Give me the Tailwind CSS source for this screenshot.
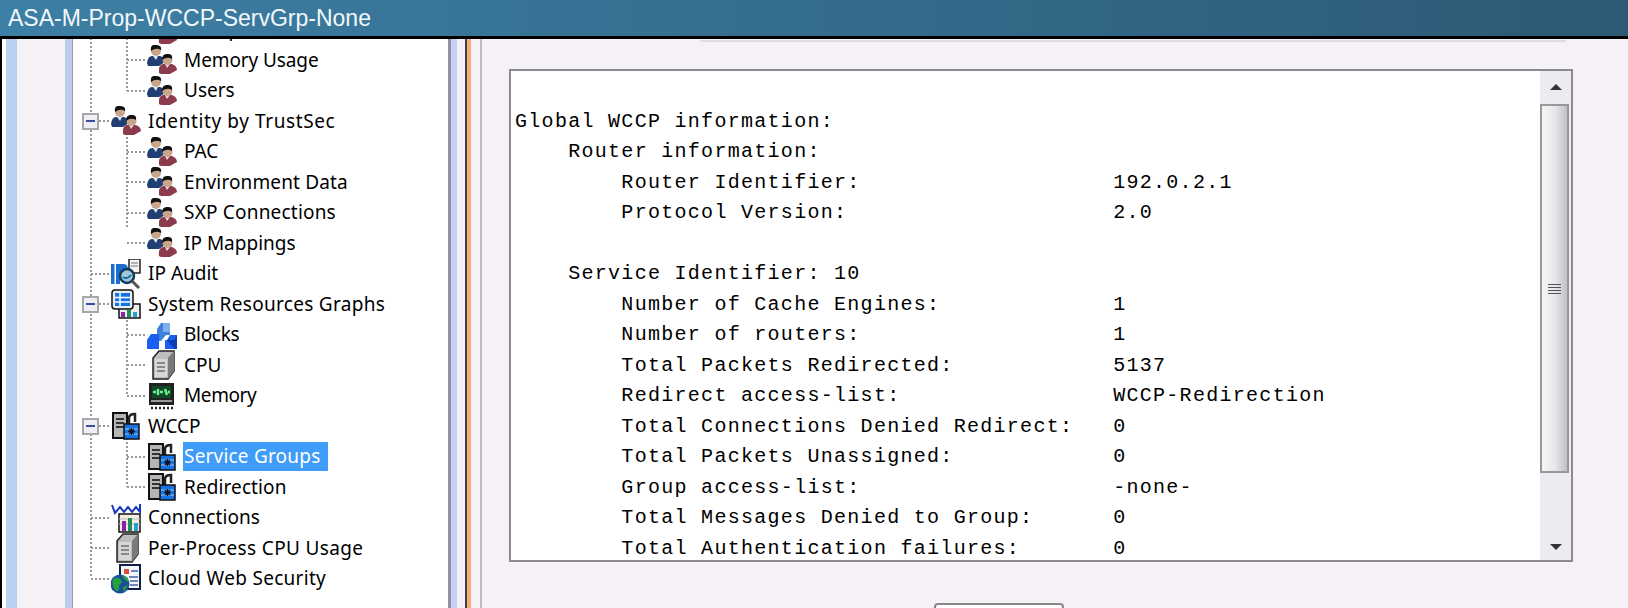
<!DOCTYPE html>
<html lang="en">
<head>
    <meta charset="UTF-8">
    <meta name="viewport" content="width=device-width, initial-scale=1.0">
    <title>ASA-M-Prop-WCCP-ServGrp-None</title>
    <script src="https://cdn.jsdelivr.net/npm/@tailwindcss/browser@4"></script>
</head>
<body class="h-[608px] overflow-hidden bg-[#f5f1f6]">

    <!-- Icons -->
    <svg class="hidden">
        <symbol id="i-people" viewBox="0 0 30 30">
            <path d="M0 18 Q1 11 5 11 L13 11 Q17 12 18 17 L12 21 L1 21Z" fill="#1f3f72"/>
            <path d="M6 11 L9 15 L11 11Z" fill="#dfe6ee"/>
            <circle cx="9" cy="6" r="5" fill="#c9a58c"/>
            <path d="M4 6 Q3 -1 9 0 Q15 0 14 5 Q9 2 4 6Z" fill="#111"/>
            <path d="M12 28 Q11 20 16 19 L25 19 Q30 21 30 25 L23 29 L14 29Z" fill="#8c3b4c"/>
            <path d="M18 19 L20 23 L23 19Z" fill="#e8dadc"/>
            <circle cx="20.500" cy="15" r="5" fill="#c9a58c"/>
            <path d="M15 15 Q15 8 21 9 Q26 9 25 14 Q20 11 15 15Z" fill="#111"/>
        </symbol>
        <symbol id="i-audit" viewBox="0 0 30 30">
            <rect x="0" y="5" width="3.500" height="20" fill="#1c6fd0"/>
            <path d="M5 5 H13 Q17 5 17 11 Q17 16 12 16 H9 V25 H5Z" fill="#1c6fd0"/>
            <rect x="18" y="0" width="11" height="14" fill="#f3f3f3" stroke="#222" stroke-width="1.500"/>
            <path d="M20 4 H27 M20 7 H27" stroke="#777"/>
            <circle cx="16" cy="17" r="7" fill="#9fc6da" stroke="#123a5c" stroke-width="2.500"/>
            <path d="M12 18 Q16 21 20 16" stroke="#1c6fa0" stroke-width="2" fill="none"/>
            <path d="M21 22 L28 29" stroke="#555" stroke-width="3"/>
        </symbol>
        <symbol id="i-graphs" viewBox="0 0 30 30">
            <rect x="8" y="15" width="21" height="14" fill="#eee" stroke="#111" stroke-width="1.500"/>
            <rect x="10" y="23" width="4" height="5" fill="#8e1fa8"/>
            <rect x="16" y="21" width="4" height="7" fill="#1f8e5a"/>
            <rect x="22" y="23" width="4" height="5" fill="#2a9fd8"/>
            <rect x="1" y="1" width="21" height="19" rx="3" fill="#e9eef5" stroke="#111" stroke-width="1.500"/>
            <rect x="4" y="4" width="15" height="13" fill="#1573e8"/>
            <path d="M4 8.500 H19 M4 13 H19 M9 4 V17" stroke="#fff" stroke-width="1.500"/>
        </symbol>
        <symbol id="i-blocks" viewBox="0 0 30 30">
            <path d="M10 9 L14 3 H23 V15 L19 15 L14 21 H10Z" fill="#3f80dd"/>
            <path d="M16 3 H23 V12 H16Z" fill="#7fb0ec"/>
            <path d="M4 14 H12 L12 29 H0 V20Z" fill="#1a5ff0"/>
            <path d="M20 20 L23 15 H30 V29 H18 V20Z" fill="#1a5ff0"/>
            <path d="M20 20 H27 L30 15 V29 H27Z" fill="#0e3fb5"/>
        </symbol>
        <symbol id="i-cpu" viewBox="0 0 30 30">
            <path d="M6 8 L12 1 H27 V21 L21 29 H6Z" fill="#bdbdbd" stroke="#222" stroke-width="1.500"/>
            <path d="M21 8 L27 1 V21 L21 29Z" fill="#7a7a7a"/>
            <rect x="8" y="9" width="12" height="18" fill="#d7d7d7"/>
            <path d="M10 13 H18 M10 17 H18 M10 21 H18" stroke="#888" stroke-width="2"/>
        </symbol>
        <symbol id="i-memory" viewBox="0 0 30 30">
            <rect x="2" y="2" width="25" height="22" fill="#222"/>
            <rect x="5" y="5" width="19" height="12" fill="#0d4a28"/>
            <path d="M6 11 H9 M11 8 V14 M13 11 H16 M18 8 L20 14 M21 11 H23" stroke="#6cf08f" stroke-width="2.500"/>
            <rect x="4" y="19" width="21" height="2" fill="#999"/>
            <path d="M4 27 H26" stroke="#222" stroke-width="2.500" stroke-dasharray="2 2"/>
        </symbol>
        <symbol id="i-wccp" viewBox="0 0 30 30">
            <rect x="2" y="2" width="14" height="25" fill="#b5b5b5" stroke="#111" stroke-width="2"/>
            <path d="M5 8 H13 M5 12 H13 M5 16 H13" stroke="#333" stroke-width="2"/>
            <path d="M18 13 V7 Q18 3 24 3 V11" stroke="#222" stroke-width="2.500" fill="none"/>
            <rect x="13" y="13" width="15" height="15" fill="#1573e8" stroke="#111" stroke-width="1.500"/>
            <path d="M14 18 H27 M14 23 H27" stroke="#9ec9f5" stroke-width="1"/>
            <path d="M20.500 17 V24 M17 20.500 H24 M18 18 L23 23 M23 18 L18 23" stroke="#111" stroke-width="1.200"/>
        </symbol>
        <symbol id="i-conn" viewBox="0 0 30 30">
            <rect x="8" y="11" width="21" height="18" fill="#f2efe2" stroke="#111" stroke-width="1.500"/>
            <path d="M8 16 H29 M8 21 H29" stroke="#bbb"/>
            <rect x="11" y="18" width="4" height="10" fill="#8e1fa8"/>
            <rect x="17" y="15" width="4" height="13" fill="#1f8e5a"/>
            <rect x="23" y="20" width="4" height="8" fill="#2a9fd8"/>
            <path d="M1 2 L4 10 L9 4 L13 9 L17 4 L21 9 L25 4 L29 9 V1" stroke="#1a35c0" stroke-width="2" fill="none"/>
        </symbol>
        <symbol id="i-cloud" viewBox="0 0 30 30">
            <rect x="9" y="1" width="20" height="24" fill="#f2f5fa" stroke="#10204a" stroke-width="2"/>
            <rect x="13" y="5" width="5" height="5" fill="#d9503f"/>
            <path d="M20 7 H27 M18 13 H27 M19 17 H27 M19 21 H27" stroke="#6d86b5" stroke-width="2"/>
            <circle cx="9" cy="20" r="9.500" fill="#1b4f9c"/>
            <path d="M2 15 Q7 12 9 15 Q13 18 8 21 Q9 28 5 27 Q0 21 2 15Z M11 11 Q17 13 18 18 Q13 17 11 11Z M12 23 L17 21 L13 28Z" fill="#24a33c"/>
        </symbol>
    </svg>

    <!-- Title bar -->
    <header class="h-[39px] bg-gradient-to-r from-[#3d80a5] to-[#2c5975] border-b-[3px] border-black pl-2 flex items-center">
        <h1 class="text-[23px] text-[#f2f7fa] font-['Liberation_Sans',sans-serif]">ASA-M-Prop-WCCP-ServGrp-None</h1>
    </header>

    <div class="flex h-[569px]">
        <!-- Left rails -->
        <div class="w-[2px] bg-black"></div>
        <div class="w-[4px] bg-white"></div>
        <div class="w-[11px] bg-[#b9d0ef]"></div>
        <div class="w-[48px]"></div>
        <div class="w-[7px] bg-[#bccdf0]"></div>
        <div class="w-[1px] bg-[#9a9aa8]"></div>

        <!-- Tree -->
        <nav class="relative w-[375px] bg-white overflow-hidden font-['Noto_Sans',sans-serif] text-[19px] text-black">
            <div class="-mt-[24.6px] relative">
                <!-- trunk -->
                <span class="absolute left-[17px] top-0 h-[564px] w-[2px] bg-[repeating-linear-gradient(to_bottom,#999_0_2px,transparent_2px_4px)]"></span>

                <!-- Identity children (end of list) -->
                <div class="relative">
                    <span class="absolute left-[53px] top-0 h-[77px] w-[2px] bg-[repeating-linear-gradient(to_bottom,#999_0_2px,transparent_2px_4px)]"></span>
                    <div class="relative h-[30.5px] flex items-center pl-[74px]"><span class="w-[20px] h-[2px] -ml-[20px] bg-[repeating-linear-gradient(to_right,#999_0_2px,transparent_2px_4px)]"></span><svg class="w-[30px] h-[30px] shrink-0"><use href="#i-people"/></svg><span class="ml-[7px]">Groups</span></div>
                    <div class="relative h-[30.5px] flex items-center pl-[74px]"><span class="w-[20px] h-[2px] -ml-[20px] bg-[repeating-linear-gradient(to_right,#999_0_2px,transparent_2px_4px)]"></span><svg class="w-[30px] h-[30px] shrink-0"><use href="#i-people"/></svg><span class="ml-[7px] tracking-[-0.1px]">Memory Usage</span></div>
                    <div class="relative h-[30.5px] flex items-center pl-[74px]"><span class="w-[20px] h-[2px] -ml-[20px] bg-[repeating-linear-gradient(to_right,#999_0_2px,transparent_2px_4px)]"></span><svg class="w-[30px] h-[30px] shrink-0"><use href="#i-people"/></svg><span class="ml-[7px]">Users</span></div>
                </div>

                <!-- Identity by TrustSec -->
                <div class="relative">
                    <span class="absolute left-[53px] top-[15px] h-[107px] w-[2px] bg-[repeating-linear-gradient(to_bottom,#999_0_2px,transparent_2px_4px)]"></span>
                    <div class="relative h-[30.5px] flex items-center pl-[38px]">
                        <span class="absolute left-[9px] w-[17px] h-[17px] border-2 border-[#a8a8a8] bg-[#eeeef4] flex items-center justify-center"><span class="w-[9px] h-[2px] bg-[#3a4f9a]"></span></span>
                        <span class="w-[12px] h-[2px] -ml-[12px] bg-[repeating-linear-gradient(to_right,#999_0_2px,transparent_2px_4px)]"></span><svg class="w-[30px] h-[30px] shrink-0"><use href="#i-people"/></svg><span class="ml-[7px] tracking-[0.6px]">Identity by TrustSec</span>
                    </div>
                    <div class="relative h-[30.5px] flex items-center pl-[74px]"><span class="w-[20px] h-[2px] -ml-[20px] bg-[repeating-linear-gradient(to_right,#999_0_2px,transparent_2px_4px)]"></span><svg class="w-[30px] h-[30px] shrink-0"><use href="#i-people"/></svg><span class="ml-[7px]">PAC</span></div>
                    <div class="relative h-[30.5px] flex items-center pl-[74px]"><span class="w-[20px] h-[2px] -ml-[20px] bg-[repeating-linear-gradient(to_right,#999_0_2px,transparent_2px_4px)]"></span><svg class="w-[30px] h-[30px] shrink-0"><use href="#i-people"/></svg><span class="ml-[7px] tracking-[0.13px]">Environment Data</span></div>
                    <div class="relative h-[30.5px] flex items-center pl-[74px]"><span class="w-[20px] h-[2px] -ml-[20px] bg-[repeating-linear-gradient(to_right,#999_0_2px,transparent_2px_4px)]"></span><svg class="w-[30px] h-[30px] shrink-0"><use href="#i-people"/></svg><span class="ml-[7px] tracking-[0.2px]">SXP Connections</span></div>
                    <div class="relative h-[30.5px] flex items-center pl-[74px]"><span class="w-[20px] h-[2px] -ml-[20px] bg-[repeating-linear-gradient(to_right,#999_0_2px,transparent_2px_4px)]"></span><svg class="w-[30px] h-[30px] shrink-0"><use href="#i-people"/></svg><span class="ml-[7px]">IP Mappings</span></div>
                </div>

                <!-- IP Audit -->
                <div class="relative h-[30.5px] flex items-center pl-[38px]"><span class="w-[20px] h-[2px] -ml-[20px] bg-[repeating-linear-gradient(to_right,#999_0_2px,transparent_2px_4px)]"></span><svg class="w-[30px] h-[30px] shrink-0"><use href="#i-audit"/></svg><span class="ml-[7px]">IP Audit</span></div>

                <!-- System Resources Graphs -->
                <div class="relative">
                    <span class="absolute left-[53px] top-[15px] h-[92px] w-[2px] bg-[repeating-linear-gradient(to_bottom,#999_0_2px,transparent_2px_4px)]"></span>
                    <div class="relative h-[30.5px] flex items-center pl-[38px]">
                        <span class="absolute left-[9px] w-[17px] h-[17px] border-2 border-[#a8a8a8] bg-[#eeeef4] flex items-center justify-center"><span class="w-[9px] h-[2px] bg-[#3a4f9a]"></span></span>
                        <span class="w-[12px] h-[2px] -ml-[12px] bg-[repeating-linear-gradient(to_right,#999_0_2px,transparent_2px_4px)]"></span><svg class="w-[30px] h-[30px] shrink-0"><use href="#i-graphs"/></svg><span class="ml-[7px] tracking-[0.3px]">System Resources Graphs</span>
                    </div>
                    <div class="relative h-[30.5px] flex items-center pl-[74px]"><span class="w-[20px] h-[2px] -ml-[20px] bg-[repeating-linear-gradient(to_right,#999_0_2px,transparent_2px_4px)]"></span><svg class="w-[30px] h-[30px] shrink-0"><use href="#i-blocks"/></svg><span class="ml-[7px] tracking-[-0.3px]">Blocks</span></div>
                    <div class="relative h-[30.5px] flex items-center pl-[74px]"><span class="w-[20px] h-[2px] -ml-[20px] bg-[repeating-linear-gradient(to_right,#999_0_2px,transparent_2px_4px)]"></span><svg class="w-[30px] h-[30px] shrink-0"><use href="#i-cpu"/></svg><span class="ml-[7px]">CPU</span></div>
                    <div class="relative h-[30.5px] flex items-center pl-[74px]"><span class="w-[20px] h-[2px] -ml-[20px] bg-[repeating-linear-gradient(to_right,#999_0_2px,transparent_2px_4px)]"></span><svg class="w-[30px] h-[30px] shrink-0"><use href="#i-memory"/></svg><span class="ml-[7px] tracking-[-0.4px]">Memory</span></div>
                </div>

                <!-- WCCP -->
                <div class="relative">
                    <span class="absolute left-[53px] top-[15px] h-[61px] w-[2px] bg-[repeating-linear-gradient(to_bottom,#999_0_2px,transparent_2px_4px)]"></span>
                    <div class="relative h-[30.5px] flex items-center pl-[38px]">
                        <span class="absolute left-[9px] w-[17px] h-[17px] border-2 border-[#a8a8a8] bg-[#eeeef4] flex items-center justify-center"><span class="w-[9px] h-[2px] bg-[#3a4f9a]"></span></span>
                        <span class="w-[12px] h-[2px] -ml-[12px] bg-[repeating-linear-gradient(to_right,#999_0_2px,transparent_2px_4px)]"></span><svg class="w-[30px] h-[30px] shrink-0"><use href="#i-wccp"/></svg><span class="ml-[7px]">WCCP</span>
                    </div>
                    <div class="relative h-[30.5px] flex items-center pl-[74px]"><span class="w-[20px] h-[2px] -ml-[20px] bg-[repeating-linear-gradient(to_right,#999_0_2px,transparent_2px_4px)]"></span><svg class="w-[30px] h-[30px] shrink-0"><use href="#i-wccp"/></svg><span class="ml-[6px] px-[1px] w-[145px] bg-[#3f9cf8] text-white tracking-[0.2px]">Service Groups</span></div>
                    <div class="relative h-[30.5px] flex items-center pl-[74px]"><span class="w-[20px] h-[2px] -ml-[20px] bg-[repeating-linear-gradient(to_right,#999_0_2px,transparent_2px_4px)]"></span><svg class="w-[30px] h-[30px] shrink-0"><use href="#i-wccp"/></svg><span class="ml-[7px] tracking-[0.1px]">Redirection</span></div>
                </div>

                <!-- Remaining top level items -->
                <div class="relative h-[30.5px] flex items-center pl-[38px]"><span class="w-[20px] h-[2px] -ml-[20px] bg-[repeating-linear-gradient(to_right,#999_0_2px,transparent_2px_4px)]"></span><svg class="w-[30px] h-[30px] shrink-0"><use href="#i-conn"/></svg><span class="ml-[7px] tracking-[0.1px]">Connections</span></div>
                <div class="relative h-[30.5px] flex items-center pl-[38px]"><span class="w-[20px] h-[2px] -ml-[20px] bg-[repeating-linear-gradient(to_right,#999_0_2px,transparent_2px_4px)]"></span><svg class="w-[30px] h-[30px] shrink-0"><use href="#i-cpu"/></svg><span class="ml-[7px] tracking-[0.35px]">Per-Process CPU Usage</span></div>
                <div class="relative h-[30.5px] flex items-center pl-[38px]"><span class="w-[20px] h-[2px] -ml-[20px] bg-[repeating-linear-gradient(to_right,#999_0_2px,transparent_2px_4px)]"></span><svg class="w-[30px] h-[30px] shrink-0"><use href="#i-cloud"/></svg><span class="ml-[7px] tracking-[0.3px]">Cloud Web Security</span></div>
            </div>
        </nav>

        <!-- Splitter -->
        <div class="w-[3px] bg-[#8f8f9f]"></div>
        <div class="w-[6px] bg-[#c5d0f5]"></div>
        <div class="w-[8px]"></div>
        <div class="w-[2px] bg-[#3b3b60]"></div>
        <div class="w-[4px] bg-[#f5b06a]"></div>
        <div class="w-[9px]"></div>
        <div class="w-[2px] bg-[#bbbbbb]"></div>

        <!-- Output pane -->
        <main class="flex-1 min-w-0">
            <div class="ml-[218px] mr-[62px] mt-[1px] h-[2px] bg-[#dcdce6]"></div>
            <div class="ml-[27px] mt-[27px] w-[1064px] h-[493px] border-2 border-[#8a8a94] bg-white flex">
                <pre class="flex-1 pt-[35.8px] pl-[4px] font-['Liberation_Mono',monospace] text-[20px] leading-[30.5px] tracking-[1.29px] text-black">Global WCCP information:
    Router information:
        Router Identifier:                   192.0.2.1
        Protocol Version:                    2.0

    Service Identifier: 10
        Number of Cache Engines:             1
        Number of routers:                   1
        Total Packets Redirected:            5137
        Redirect access-list:                WCCP-Redirection
        Total Connections Denied Redirect:   0
        Total Packets Unassigned:            0
        Group access-list:                   -none-
        Total Messages Denied to Group:      0
        Total Authentication failures:       0</pre>
                <!-- Scrollbar -->
                <div class="relative w-[31px] bg-[#ececf0] flex flex-col">
                    <div class="h-[33px] flex items-center justify-center pb-[2px]">
                        <span class="w-0 h-0 border-x-[6px] border-x-transparent border-b-[6px] border-b-[#333]"></span>
                    </div>
                    <div class="h-[369px] w-[29px] border-2 border-[#999] bg-gradient-to-r from-[#f6f6f6] via-[#e8e8ec] to-[#c0c0c8] flex flex-col items-center justify-center gap-[2px]">
                        <span class="w-[13px] h-[1px] bg-[#555]"></span>
                        <span class="w-[13px] h-[1px] bg-[#555]"></span>
                        <span class="w-[13px] h-[1px] bg-[#555]"></span>
                        <span class="w-[13px] h-[1px] bg-[#555]"></span>
                    </div>
                    <div class="flex-1 flex items-end justify-center pb-[10px]">
                        <span class="w-0 h-0 border-x-[6px] border-x-transparent border-t-[6px] border-t-[#333]"></span>
                    </div>
                </div>
            </div>
            <button class="block ml-[452px] mt-[41px] w-[130px] h-[30px] border-2 border-[#888] rounded-[4px] bg-white"></button>
        </main>
    </div>
</body>
</html>
